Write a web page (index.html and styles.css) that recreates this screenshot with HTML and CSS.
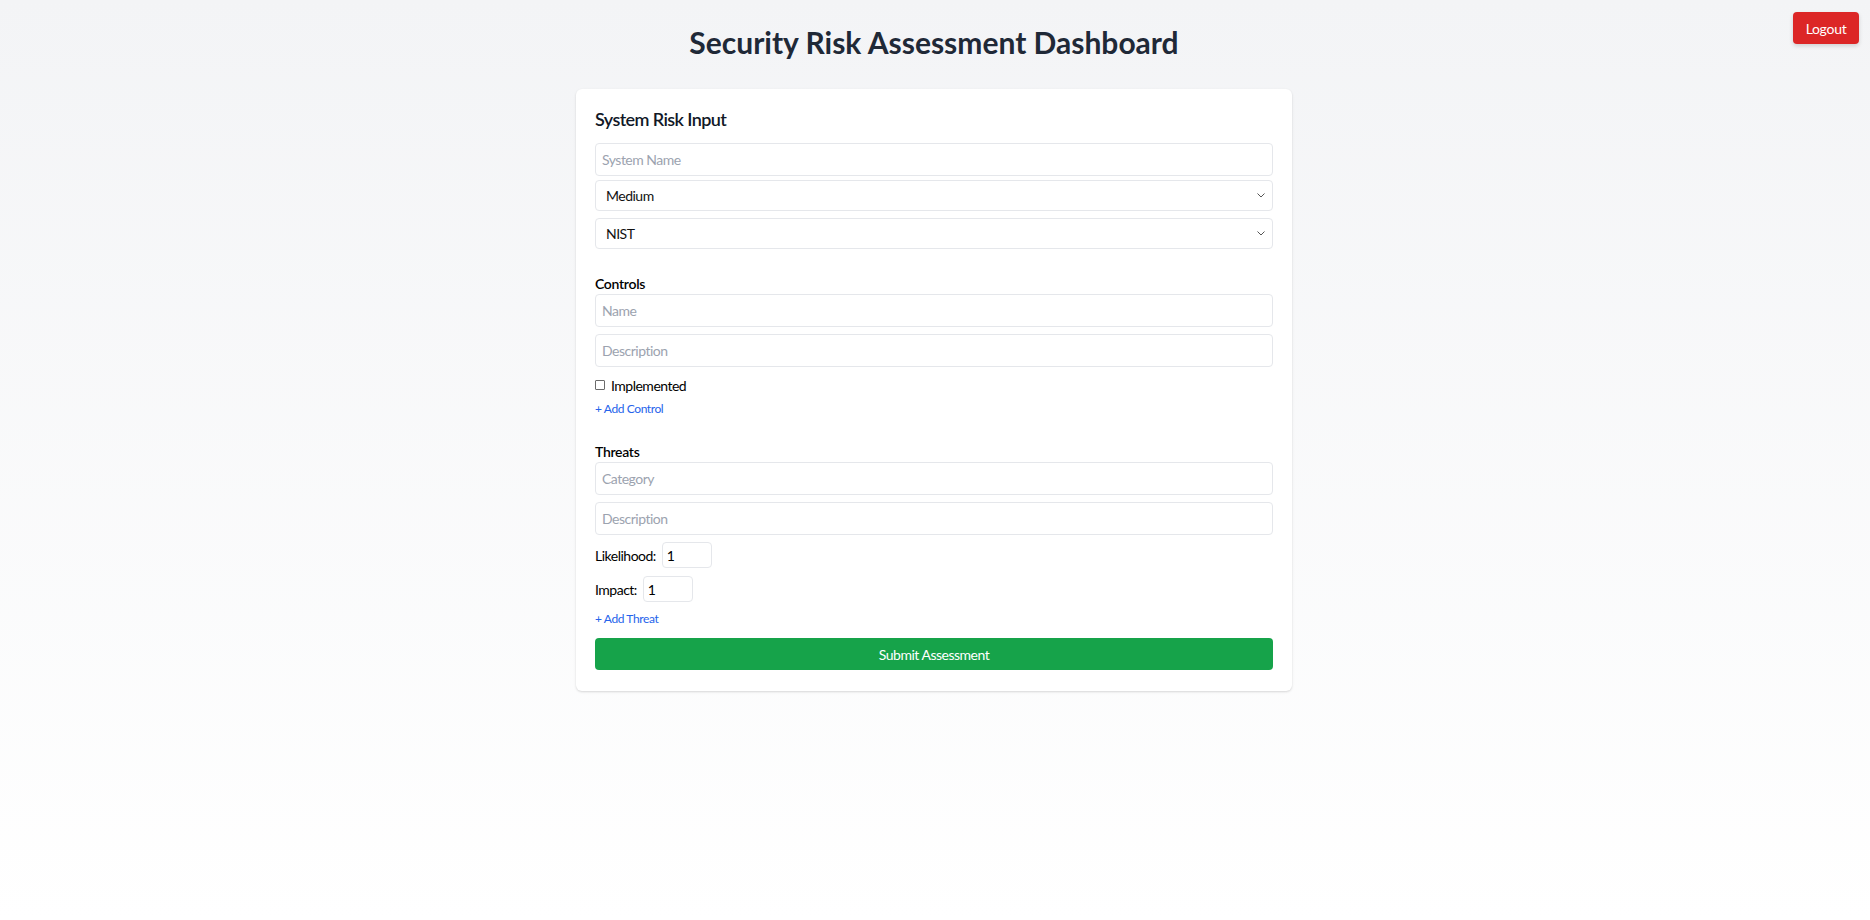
FILE: index.html
```html
<!DOCTYPE html>
<html lang="en">
<head>
<meta charset="utf-8">
<title>Security Risk Assessment Dashboard</title>
<link rel="stylesheet" href="styles.css">
</head>
<body>
<button class="logout" type="button">Logout</button>
<main class="page">
  <h1 class="title">Security Risk Assessment Dashboard</h1>
  <section class="card">
    <h2 class="card-title">System Risk Input</h2>
    <input class="field" type="text" placeholder="System Name">
    <select class="field select select-a">
      <option>Medium</option>
    </select>
    <select class="field select">
      <option>NIST</option>
    </select>

    <div class="group">
      <div class="group-label">Controls</div>
      <input class="field" type="text" placeholder="Name">
      <input class="field field-gap" type="text" placeholder="Description">
      <label class="check-row"><input class="check" type="checkbox"><span>Implemented</span></label>
      <button class="add-link add-control" type="button">+ Add Control</button>
    </div>

    <div class="group">
      <div class="group-label">Threats</div>
      <input class="field" type="text" placeholder="Category">
      <input class="field field-gap" type="text" placeholder="Description">
      <label class="num-row num-first"><span>Likelihood:</span><input class="num" type="number" value="1" min="1" max="5"></label>
      <label class="num-row"><span>Impact:</span><input class="num" type="number" value="1" min="1" max="5"></label>
      <button class="add-link add-threat" type="button">+ Add Threat</button>
    </div>

    <button class="submit" type="button">Submit Assessment</button>
  </section>
</main>
</body>
</html>
```

FILE: styles.css
```css
html, body {
  margin: 0;
  padding: 0;
}

body {
  min-height: 100vh;
  font-family: "Lato", "Open Sans", "Liberation Sans", sans-serif;
  color: #111827;
  background: linear-gradient(to bottom, #f3f4f6 0%, #ffffff 100%);
  position: relative;
}

.logout {
  position: absolute;
  top: 12px;
  right: 11px;
  width: 66px;
  height: 32px;
  border: none;
  border-radius: 4px;
  background: #dc2626;
  color: #ffffff;
  font: 14px "Lato", "Open Sans", sans-serif;
  letter-spacing: -0.3px;
  box-shadow: 0 2px 4px rgba(0, 0, 0, 0.15);
  cursor: pointer;
}

.page {
  padding-top: 24px;
  padding-right: 2px;
}

.title {
  margin: 0 0 29px;
  text-align: center;
  font-size: 30px;
  line-height: 36px;
  font-weight: 700;
  color: #1f2937;
}

.card {
  width: 716px;
  box-sizing: border-box;
  margin: 0 auto;
  padding: 16px 19px 21px;
  background: #ffffff;
  border-radius: 6px;
  box-shadow: 0 1px 3px rgba(0, 0, 0, 0.1), 0 1px 2px rgba(0, 0, 0, 0.06);
}

.card-title {
  margin: 0 0 10px;
  font-size: 18px;
  line-height: 28px;
  font-weight: 600;
  letter-spacing: -0.6px;
  color: #111827;
}

.field {
  display: block;
  width: 100%;
  box-sizing: border-box;
  height: 33px;
  margin: 0;
  padding: 0 6px;
  border: 1px solid #e5e7eb;
  border-radius: 4px;
  background: #ffffff;
  font: 14px "Lato", "Open Sans", sans-serif;
  letter-spacing: -0.5px;
  color: #111111;
  outline: none;
}

.field::placeholder {
  color: #9ca3af;
}

.select {
  height: 31px;
  padding: 0 24px 0 10px;
  margin-top: 7px;
  -webkit-appearance: none;
  appearance: none;
  background-image: url("data:image/svg+xml,%3Csvg xmlns='http://www.w3.org/2000/svg' width='8' height='5' viewBox='0 0 8 5'%3E%3Cpath d='M0.5 0.5 L4 4 L7.5 0.5' fill='none' stroke='%23555' stroke-width='1'/%3E%3C/svg%3E");
  background-repeat: no-repeat;
  background-position: right 7px center;
}

.select-a {
  margin-top: 4px;
}

.group {
  margin-top: 24px;
}

.group-label {
  padding-top: 1px;
  font-size: 14px;
  line-height: 20px;
  font-weight: 600;
  letter-spacing: -0.3px;
  color: #000000;
}

.field-gap {
  margin-top: 7px;
}

.check-row {
  display: flex;
  align-items: center;
  height: 20px;
  margin-top: 8px;
  font-size: 14px;
  letter-spacing: -0.5px;
  color: #000000;
}

.check {
  -webkit-appearance: none;
  appearance: none;
  width: 10px;
  height: 10px;
  margin: 0 6px 0 0;
  border: 1px solid #6b6b6b;
  border-radius: 1px;
  background: #ffffff;
}

.add-link {
  display: block;
  margin: 6px 0 0;
  padding: 0;
  border: none;
  background: none;
  font: 12px/16px "Lato", "Open Sans", sans-serif;
  letter-spacing: -0.4px;
  color: #2563eb;
  cursor: pointer;
}

.num-row {
  display: flex;
  align-items: center;
  gap: 6px;
  margin-top: 8px;
  font-size: 14px;
  letter-spacing: -0.5px;
  color: #000000;
}

.num-first {
  margin-top: 7px;
}

.num {
  width: 50px;
  height: 26px;
  box-sizing: border-box;
  padding: 0 4px;
  border: 1px solid #e5e7eb;
  border-radius: 4px;
  font: 14px "Lato", "Open Sans", sans-serif;
  color: #000000;
  -moz-appearance: textfield;
}

.num::-webkit-inner-spin-button,
.num::-webkit-outer-spin-button {
  -webkit-appearance: none;
  margin: 0;
}

.add-threat {
  margin-top: 9px;
}

.submit {
  display: block;
  width: 100%;
  height: 32px;
  margin-top: 11px;
  border: none;
  border-radius: 4px;
  background: #16a34a;
  color: #ffffff;
  font: 14px "Lato", "Open Sans", sans-serif;
  letter-spacing: -0.5px;
  cursor: pointer;
}
```
